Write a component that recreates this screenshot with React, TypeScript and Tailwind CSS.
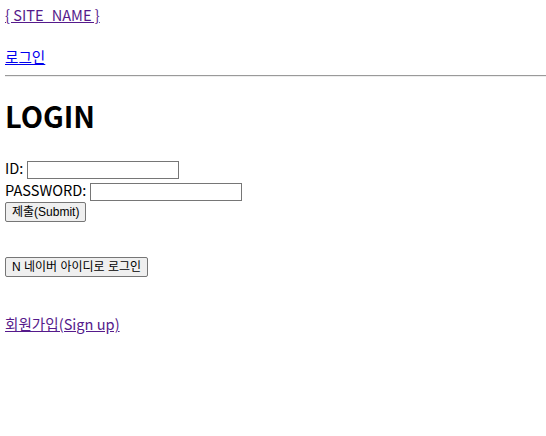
const btnFont = { fontFamily: '"Liberation Sans", "Noto Sans CJK KR", sans-serif' };

export default function App() {
  return (
    <div
      className="min-h-[436px] bg-white pl-[5px] pt-[4px] text-[14.6px] leading-[21px] text-black"
      style={{ fontFamily: '"Noto Sans CJK KR", "Noto Sans", sans-serif' }}
    >
      <div>
        <a href="#" className="text-[#551a8b] underline">
          {"{ SITE_NAME }"}
        </a>
      </div>
      <div className="mt-[21px]">
        <a href="#" className="text-[#0000ee] underline">
          로그인
        </a>
      </div>
      <hr className="mt-[8px] border-y border-t-[#9a9a9a] border-b-[#eeeeee]" />
      <h1 className="mt-[17px] text-[29px] font-bold leading-[42px]">LOGIN</h1>
      <form className="mt-[24px] flex flex-col items-start">
        <label className="flex h-[22px] items-start">
          <span className="leading-[15px]">ID:</span>
          <input
            type="text"
            className="ml-[4px] mt-[1px] h-[18px] w-[152px] border border-[#767676] px-[2px]"
          />
        </label>
        <label className="flex h-[20px] items-start">
          <span className="leading-[15px]">PASSWORD:</span>
          <input
            type="password"
            className="ml-[4px] mt-[1px] h-[18px] w-[152px] border border-[#767676] px-[2px]"
          />
        </label>
        <button
          type="button"
          className="h-[20px] rounded-[2px] border border-[#767676] bg-[#efefef] px-[6px] text-[12px] leading-[16px]"
          style={btnFont}
        >
          제출(Submit)
        </button>
      </form>
      <div className="mt-[35px] flex">
        <button
          type="button"
          className="h-[20px] rounded-[2px] border border-[#767676] bg-[#efefef] px-[6px] text-[12px] leading-[16px]"
          style={btnFont}
        >
          N 네이버 아이디로 로그인
        </button>
      </div>
      <div className="mt-[36px]">
        <a href="#" className="text-[#551a8b] underline">
          회원가입(Sign up)
        </a>
      </div>
    </div>
  );
}
